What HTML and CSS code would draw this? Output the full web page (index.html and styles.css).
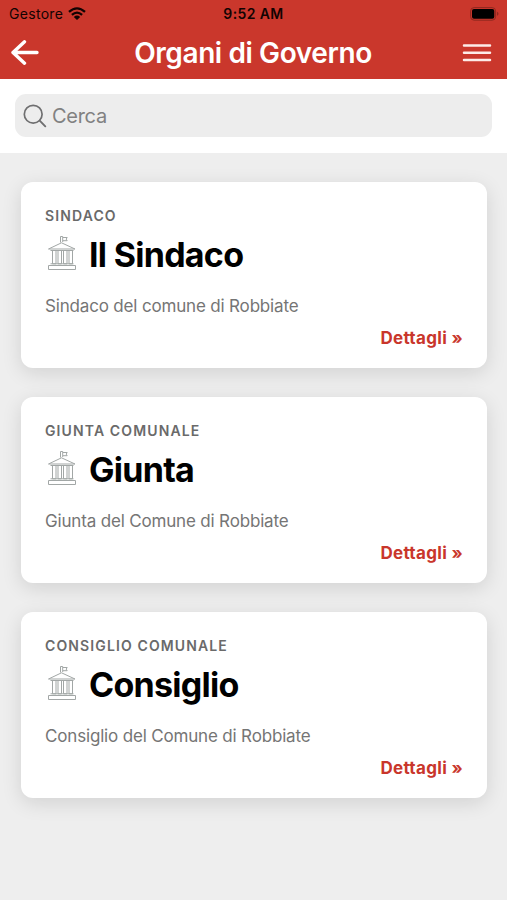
FILE: index.html
```
<!DOCTYPE html>
<html lang="it">
<head>
  <meta charset="UTF-8" />
  <meta name="viewport" content="width=device-width, initial-scale=1.0"/>
  <title>Organi di Governo</title>
  <link rel="stylesheet" href="styles.css">
</head>
<body>
  <!-- building icon shared by the cards -->
  <svg class="symbols" width="0" height="0">
    <symbol id="building" viewBox="0 0 30 36">
      <path d="M13.500 7.500V1.500h2.200v5.500M16 2.500h4.200l-1 1.600 1 1.600H16M1.500 14L14.500 7.800 28 14zM1.500 30.500h27v4h-27z"/>
      <path d="M3.500 15.500h23M3.500 28.800h23M5.500 15.500h3.500v13.300h-3.500zM11 15.500h3.500v13.300h-3.500zM16.500 15.500h3.500v13.300h-3.500zM22 15.500h3.500v13.300h-3.500z"/>
    </symbol>
  </svg>

  <header class="header">
    <div class="status">
      <div class="carrier">
        <span>Gestore</span>
        <svg class="wifi" width="18" height="14" viewBox="0 0 18 14">
          <path d="M1 4.900Q9-2.100 17 4.900M3.900 7.800Q9 3.400 14.100 7.800" fill="none" stroke="#120302" stroke-width="2.300"/>
          <path d="M5.800 9.900Q9 7.300 12.200 9.900L9 13.100z" fill="#120302"/>
        </svg>
      </div>
      <span class="time">9:52 AM</span>
      <svg class="battery" width="29" height="14" viewBox="0 0 29 14">
        <rect x=".6" y=".6" width="25" height="12.600" rx="3.500" fill="none" stroke="#8e281f"/>
        <rect x="2" y="2" width="22.300" height="9.800" rx="2" fill="#000"/>
        <path d="M27 4.800q1.500.6 1.500 2t-1.500 2z" fill="#8e281f"/>
      </svg>
    </div>
    <div class="navbar">
      <svg class="back" width="28" height="26" viewBox="0 0 28 26">
        <path d="M13.500 1.800L2 12.500l11.500 10.700M2.500 12.500h23.500" fill="none" stroke="#fff" stroke-width="3.400" stroke-linecap="round" stroke-linejoin="round"/>
      </svg>
      <h1 class="title">Organi di Governo</h1>
      <svg class="menu" width="30" height="20" viewBox="0 0 30 20">
        <path d="M2 2.500h26M2 9.800h26M2 17.100h26" stroke="#fdebe8" stroke-width="2.500" stroke-linecap="round"/>
      </svg>
    </div>
  </header>

  <div class="search-area">
    <label class="search">
      <svg width="24" height="24" viewBox="0 0 24 24">
        <path d="M16.700 16.700L22.300 22.300" stroke="#6f6f70" stroke-width="1.900" stroke-linecap="round"/>
        <circle cx="10.200" cy="10.200" r="8.900" fill="none" stroke="#6f6f70" stroke-width="1.700"/>
      </svg>
      <input type="text" placeholder="Cerca">
    </label>
  </div>

  <main class="cards">
    <article class="card">
      <div class="category">SINDACO</div>
      <div class="heading">
        <svg class="icon"><use href="#building"/></svg>
        <h2>Il Sindaco</h2>
      </div>
      <p class="description">Sindaco del comune di Robbiate</p>
      <a class="details">Dettagli »</a>
    </article>
    <article class="card">
      <div class="category">GIUNTA COMUNALE</div>
      <div class="heading">
        <svg class="icon"><use href="#building"/></svg>
        <h2>Giunta</h2>
      </div>
      <p class="description">Giunta del Comune di Robbiate</p>
      <a class="details">Dettagli »</a>
    </article>
    <article class="card">
      <div class="category">CONSIGLIO COMUNALE</div>
      <div class="heading">
        <svg class="icon"><use href="#building"/></svg>
        <h2>Consiglio</h2>
      </div>
      <p class="description">Consiglio del Comune di Robbiate</p>
      <a class="details">Dettagli »</a>
    </article>
  </main>
</body>
</html>
```
FILE: styles.css
```
* {
  box-sizing: border-box;
}
body {
  margin: 0;
  min-height: 100vh;
  background: #eeeeee;
  font-family: Inter, "Liberation Sans", sans-serif;
}
.symbols {
  display: block;
}
.header {
  height: 79px;
  background: #ca372c;
}
.status {
  display: grid;
  grid-template-columns: 1fr auto 1fr;
  align-items: center;
  height: 27px;
  padding: 0 8px;
  font-size: 14px;
  line-height: 27px;
  color: #120302;
}
.carrier {
  display: flex;
  align-items: center;
  gap: 5px;
  padding-left: 1px;
  letter-spacing: 0.3px;
}
.time {
  font-weight: 600;
  letter-spacing: 0.4px;
}
.battery {
  justify-self: end;
}
.navbar {
  display: grid;
  grid-template-columns: 40px 1fr 40px;
  align-items: center;
  height: 51px;
  padding: 0 15px 0 11px;
}
.title {
  margin: 0;
  font-size: 28px;
  font-weight: 600;
  line-height: 50px;
  letter-spacing: -0.4px;
  text-indent: 3px;
  text-align: center;
  color: #fff;
}
.menu {
  justify-self: end;
}
.search-area {
  height: 74px;
  padding: 15px;
  background: #fff;
}
.search {
  display: flex;
  align-items: center;
  gap: 5px;
  height: 43px;
  padding: 0 9px 0 8px;
  border-radius: 11px;
  background: #ededed;
}
.search input {
  flex: 1;
  padding: 0;
  border: none;
  outline: none;
  background: none;
  font-family: inherit;
  font-size: 20px;
  letter-spacing: -0.3px;
}
.search input::placeholder {
  color: #818181;
}
.cards {
  display: flex;
  flex-direction: column;
  gap: 29px;
  padding: 29px 20px 0 21px;
}
.card {
  display: flex;
  flex-direction: column;
  height: 186px;
  padding: 24px 24px 0 24px;
  border-radius: 12px;
  background: #fff;
  box-shadow: 0 5px 20px rgba(0, 0, 0, 0.12);
}
.category {
  font-size: 14px;
  font-weight: 600;
  line-height: 20px;
  letter-spacing: 1.12px;
  color: #6a6a6a;
}
.heading {
  display: flex;
  align-items: center;
  gap: 12px;
  height: 54px;
  padding-left: 2px;
}
.heading h2 {
  margin: 0;
  padding-top: 3px;
  font-size: 34px;
  font-weight: 700;
  line-height: 54px;
  letter-spacing: -0.72px;
  color: #000;
}
.icon {
  width: 30px;
  height: 36px;
  fill: none;
  stroke: #a2a7a6;
  stroke-width: 1;
}
.description {
  margin: 15px 0 0;
  font-size: 17px;
  line-height: 22px;
  letter-spacing: -0.17px;
  color: #757575;
}
.details {
  align-self: flex-end;
  margin-top: 10px;
  font-size: 17px;
  font-weight: 700;
  line-height: 22px;
  letter-spacing: 0.32px;
  color: #c9362b;
}
```
